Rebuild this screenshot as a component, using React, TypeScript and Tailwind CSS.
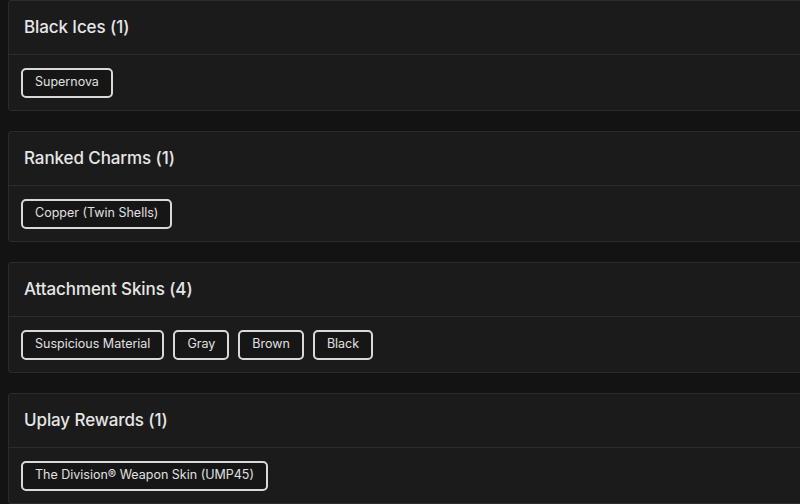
import React from 'react';

interface Group {
  title: string;
  items: string[];
}

const groups: Group[] = [
  { title: 'Black Ices', items: ['Supernova'] },
  { title: 'Ranked Charms', items: ['Copper (Twin Shells)'] },
  { title: 'Attachment Skins', items: ['Suspicious Material', 'Gray', 'Brown', 'Black'] },
  { title: 'Uplay Rewards', items: ['The Division® Weapon Skin (UMP45)'] },
];

const App = () => {
  return (
    <div
      className="w-full h-[504px] overflow-hidden bg-[#131313] pl-2"
      style={{ fontFamily: 'Inter, "Noto Sans", sans-serif' }}
    >
      <div className="flex flex-col gap-5 -mr-4">
        {groups.map((g) => (
          <div key={g.title} className="bg-[#1b1b1b] border border-[#2b2b2b] rounded-[3px]">
            <div className="h-[54px] flex items-center pl-[15px] border-b border-[#2b2b2b]">
              <h3 className="text-[17px] text-[#e6e6e6] font-medium tracking-[-0.1px]">
                {g.title} ({g.items.length})
              </h3>
            </div>
            <div className="h-[55px] flex items-center gap-[9px] px-3">
              {g.items.map((item) => (
                <button
                  key={item}
                  className="h-[30px] px-[12px] border-2 border-[#d9d9d9] rounded-[5px] bg-[#161616] text-[12.5px] text-[#e0e0e0]"
                >
                  {item}
                </button>
              ))}
            </div>
          </div>
        ))}
      </div>
    </div>
  );
};

export default App;
